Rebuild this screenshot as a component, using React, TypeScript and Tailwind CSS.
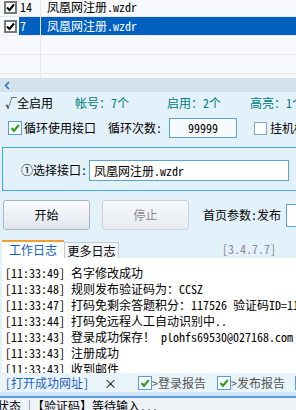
import React from "react";

const font = "font-['Noto_Sans_Mono_CJK_SC','Noto_Sans_CJK_SC',monospace]";

const listRows = [
  { no: "14", name: "凤凰网注册.wzdr", sel: false },
  { no: "7", name: "凤凰网注册.wzdr", sel: true },
  { no: "", name: "", sel: false },
  { no: "", name: "", sel: false },
  { no: "", name: "", sel: false },
];

const logs = [
  "[11:33:49] 名字修改成功",
  "[11:33:48] 规则发布验证码为：CCSZ",
  "[11:33:47] 打码免剩余答题积分：117526 验证码ID=11",
  "[11:33:44] 打码免远程人工自动识别中..",
  "[11:33:43] 登录成功保存！ plohfs69530@027168.com",
  "[11:33:43] 注册成功",
  "[11:33:43] 收到邮件",
];

function ListCheck() {
  return (
    <span className="w-[13px] h-[13px] border-2 border-[#787878] bg-white flex items-center justify-center">
      <svg width="9" height="9" viewBox="0 0 9 9">
        <path d="M1 4.5 L3.5 7 L8 1.5" stroke="#000" strokeWidth="2" fill="none" />
      </svg>
    </span>
  );
}

function GreenCheck() {
  return (
    <span className="w-[14px] h-[14px] border border-[#4f9fdc] bg-white flex items-center justify-center shrink-0">
      <svg width="10" height="10" viewBox="0 0 10 10">
        <path d="M1.5 5 L4 7.8 L8.8 2" stroke="#2f9b2a" strokeWidth="2.2" fill="none" />
      </svg>
    </span>
  );
}

export default function App() {
  return (
    <div className={`w-[296px] h-[410px] overflow-hidden bg-[#e3f1fa] text-[12px] leading-none text-black ${font}`}>
      {/* task list */}
      <div className="h-[78px] bg-[#f8f9fc] overflow-hidden">
        <div className="-mt-[2px]">
          {listRows.map((r, i) => (
            <div key={i} className="flex h-[19px] border-b border-[#e7e9ee]">
              <div className="w-[19px] flex items-center pl-[4px]">{r.no && <ListCheck />}</div>
              <div className={`w-[21px] flex items-center pl-[1px] ${r.sel ? "bg-[#0060c0] text-white" : ""}`}>{r.no}</div>
              <div className="w-px bg-[#e7e9ee]" />
              <div className={`flex-1 flex items-center pl-[6px] ${r.sel ? "bg-[#0060c0] text-white" : ""}`}>{r.name}</div>
            </div>
          ))}
        </div>
      </div>
      <div className="h-[14px] bg-[#d3e3ec] flex items-center pl-[4px]">
        <svg width="6" height="9" viewBox="0 0 6 9">
          <path d="M5 1 L1.5 4.5 L5 8" stroke="#2f6fc4" strokeWidth="1.6" fill="none" />
        </svg>
      </div>

      {/* counters */}
      <div className="h-[22px] flex items-center pl-[5px] whitespace-nowrap">
        <span className="w-[70px] shrink-0">√全启用</span>
        <span className="w-[92px] shrink-0 text-[#007b7b]">帐号：7个</span>
        <span className="w-[83px] shrink-0 text-[#007b7b]">启用：2个</span>
        <span className="shrink-0 text-[#007b7b]">高亮：1个</span>
      </div>

      {/* loop row */}
      <div className="h-[28px] flex items-center pl-[8px] whitespace-nowrap">
        <GreenCheck />
        <span className="ml-[2px] shrink-0">循环使用接口</span>
        <span className="ml-[12px] shrink-0">循环次数:</span>
        <div className="ml-[7px] w-[68px] h-[20px] shrink-0 border border-[#5aa2da] bg-[#f8fbfe] flex items-center justify-center">99999</div>
        <span className="ml-[17px] w-[13px] h-[13px] border border-[#7aa8cc] bg-white shrink-0" />
        <span className="ml-[3px] shrink-0">挂机模式</span>
      </div>

      {/* group box */}
      <div className="mt-[5px] ml-[2px] w-[300px] h-[44px] border-l border-t border-b border-[#45a8e6] flex items-start pt-[12px] whitespace-nowrap">
        <span className="ml-[18px] mt-[4px] shrink-0">①选择接口:</span>
        <div className="ml-[2px] w-[200px] h-[21px] shrink-0 border border-[#5aa2da] bg-white flex items-center pl-[4px]">凤凰网注册.wzdr</div>
      </div>

      {/* buttons */}
      <div className="mt-[9px] flex items-center pl-[3px] whitespace-nowrap">
        <button className="w-[87px] h-[30px] shrink-0 rounded-[3px] border border-[#a9b6c4] bg-gradient-to-b from-[#fbfcfd] to-[#dfe6ee] text-black">开始</button>
        <button className="ml-[12px] w-[87px] h-[30px] shrink-0 rounded-[3px] border border-[#c8d2dc] bg-gradient-to-b from-[#f7f9fb] to-[#e6ecf1] text-[#8a8a8a]">停止</button>
        <span className="ml-[14px] shrink-0">首页参数:发布</span>
        <div className="ml-[5px] w-[40px] h-[23px] border border-[#5aa2da] bg-white shrink-0" />
      </div>

      {/* tabs */}
      <div className="mt-[10px] h-[18px] flex items-end pl-[2px] whitespace-nowrap">
        <div className="w-[62px] h-[18px] shrink-0 border-t-2 border-[#f0a030] bg-white text-[#1160c0] flex items-center justify-center">工作日志</div>
        <div className="w-[55px] h-[16px] shrink-0 border border-b-0 border-[#c4ccd4] bg-[#f2f5f8] flex items-center justify-center">更多日志</div>
        <span className="ml-[103px] mb-[3px] shrink-0 text-[#8c8c8c]">[3.4.7.7]</span>
      </div>

      {/* log */}
      <div className="ml-[2px] h-[115px] bg-white pt-[7px] pl-[3px] overflow-hidden whitespace-nowrap">
        {logs.map((l, i) => (
          <div key={i} className="h-[16px] flex items-center">{l}</div>
        ))}
      </div>

      {/* report row */}
      <div className="h-[19px] flex items-center pl-[5px] whitespace-nowrap bg-[#e9f4fa]">
        <span className="shrink-0 text-[#1f62c2]">[打开成功网址]</span>
        <span className="ml-[15px] shrink-0 text-[13px]">×</span>
        <span className="ml-[21px] shrink-0"><GreenCheck /></span>
        <span className="shrink-0 text-[#555]">&gt;登录报告</span>
        <span className="ml-[11px] shrink-0"><GreenCheck /></span>
        <span className="shrink-0 text-[#555]">&gt;发布报告</span>
        <span className="ml-[10px] shrink-0"><GreenCheck /></span>
      </div>

      {/* status bar */}
      <div className="h-[4px] bg-[#d2e5f7]" />
      <div className="h-[2px] bg-[#5b9be4]" />
      <div className="h-[12px] flex items-start whitespace-nowrap bg-[#eef3f8] pt-[2px]">
        <span className="-ml-[3px] shrink-0">状态</span>
        <span className="ml-[8px] w-px h-[12px] shrink-0 bg-[#a0a8b0]" />
        <span className="ml-[2px] shrink-0">【验证码】等待输入...</span>
      </div>
    </div>
  );
}
